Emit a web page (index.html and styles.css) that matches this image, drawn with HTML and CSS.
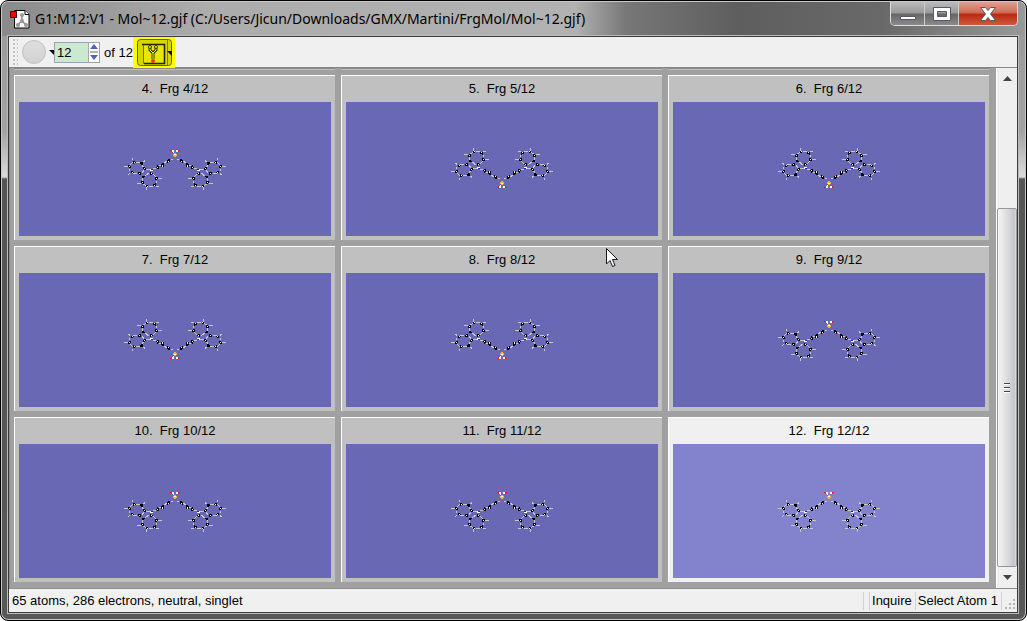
FILE: index.html
```html
<!DOCTYPE html>
<html lang="en">
<head>
<meta charset="utf-8">
<title>G1:M12:V1 - Mol~12.gjf</title>
<link rel="stylesheet" href="styles.css">
</head>
<body>
<svg class="defs" width="0" height="0" aria-hidden="true">
  <defs>
    <g id="half">
      <path d="M20 27.500H25M27 30L29 33M27 38L29 35M18 38.500H22M14.500 34V36M15 30L18 27M38 39L41 42M41.500 46V48M34 51.500H38M28.500 49L31 51M27.500 43V46M30 41L34 38M30 34.500H35M38 34L41 33M44 31L46 30M49 28L52 26M56 24.500H58" stroke="#c8c8c8" fill="none"/>
      <path d="M17.500 23V25M29.500 25V26L28 27M9 31.500H13M13.500 40L15 38M43 43.500H47M41 51.500H44M31.500 52V55M22 48.500H26" stroke="#c8c8c8" fill="none"/>
      <path d="M18 26h2v1h1v1h-2v1h-1zM25 27h3v3h-2v-1h-1zM28 32h2v1h1v2h-2v-1h-1zM23 37h3v3h-2v-1h-1zM16 36h2v1h1v1h-3zM13 30h2v1h1v2h-2v-1h-1zM35 37h1v1h2v1h-1v1h-2zM40 42h3v2h-1v1h-2zM38 49h2v-1h1v3h-3zM31 50h2v2h-2zM26 46h3v3h-2v-1h-1zM27 41h3v1h-1v1h-2zM42 30h1v1h1v3h-2v-1h-1v-1h1zM46 29h3v3h-3zM47 28h2v1h-2zM52 25h3v2h-2v1h-1zM53 24h2v1h-2z" fill="#000"/>
      <path d="M19 27h1v1h-1zM29 33h1v1h-1zM24 38h1v1h-1zM17 37h1v1h-1zM14 31h1v1h-1zM36 38h1v1h-1zM41 43h1v1h-1zM39 50h1v1h-1zM32 51h1v1h-1zM27 47h1v1h-1zM42 32h1v1h-1zM47 30h1v2h-1zM53 26h1v1h-1zM35 34h3v2h-3zM57 15h2v2h-2z" fill="#fff"/>
      <path d="M36 34h2v1h-2z" fill="#1a1aff"/>
      <path d="M55 15h2v1h-2zM56 16h1v1h-1z" fill="#f01818"/>
    </g>
    <g id="mol">
      <use href="#half"/>
      <use href="#half" transform="translate(120 0) scale(-1 1)"/>
      <path d="M59 18h2v4h-2zM58 19h4v2h-4z" fill="#f5b52e"/>
      <path d="M58 17h1v1h-1zM59 19h2v1h-2z" fill="#fff"/>
    </g>
    <symbol id="up" viewBox="0 0 120 65"><use href="#mol"/></symbol>
    <symbol id="down" viewBox="0 0 120 65"><use href="#mol" transform="translate(0 68) scale(1 -1)"/></symbol>
  </defs>
</svg>
<div class="window">
  <header class="titlebar">
    <svg class="app-icon" width="20" height="20" viewBox="0 0 20 20" aria-hidden="true">
      <path d="M4.500 1.500H15L19 5.500V19H4.500Z" fill="#f8f8f8" stroke="#000"/>
      <path d="M15 1.500V5.500H19" fill="#fff" stroke="#000"/>
      <path d="M12 6V12L7 16M12 12L16 16" stroke="#888" stroke-width="1.500" fill="none"/>
      <g fill="#999"><circle cx="12" cy="6" r="2"/><circle cx="12" cy="12" r="2"/><circle cx="8" cy="16" r="2"/><circle cx="16" cy="16" r="2"/></g>
      <path d="M.5 2.500h6v6h-6z" fill="#f00" stroke="#500"/>
    </svg>
    <h1 class="title">G1:M12:V1 - Mol~12.gjf (C:/Users/Jicun/Downloads/GMX/Martini/FrgMol/Mol~12.gjf)</h1>
    <div class="controls">
      <button class="ctl" aria-label="Minimize"><svg width="18" height="14" viewBox="0 0 18 14"><path d="M1.500 9.500h15v3h-15z" fill="#fff" stroke="#555a6b"/></svg></button>
      <button class="ctl" aria-label="Maximize"><svg width="18" height="14" viewBox="0 0 18 14"><path d="M.5.500h17v13H.5zM4.500 4.500V9.500H13.500V4.500z" fill="#fff" fill-rule="evenodd" stroke="#555a6b"/></svg></button>
      <button class="ctl close" aria-label="Close"><svg width="16" height="14" viewBox="0 0 16 14"><path d="M.5.500h5L8 3.500 10.500.500h5L10.500 7l5 6.500h-5L8 10.500 5.500 13.500h-5L5.500 7z" fill="#fff" stroke="#555a6b"/></svg></button>
    </div>
  </header>
  <div class="client">
    <div class="toolbar">
      <span class="grip"></span>
      <button class="orb" aria-label="View"></button>
      <svg class="tri" width="5" height="5" viewBox="0 0 5 5" aria-hidden="true"><path d="M0 0h5v5z"/></svg>
      <div class="spin">
        <input class="num" type="text" value="12" aria-label="Molecule">
        <div class="steps">
          <button class="step" aria-label="Next"><svg width="8" height="5" viewBox="0 0 8 5"><path d="M0 5L4 0L8 5z" fill="#4c66b8"/></svg></button>
          <span class="split"></span>
          <button class="step" aria-label="Previous"><svg width="8" height="5" viewBox="0 0 8 5"><path d="M0 0L4 5L8 0z" fill="#4c66b8"/></svg></button>
        </div>
      </div>
      <span class="of">of 12</span>
      <button class="tile" aria-label="Show multiple views">
        <svg width="42" height="31" viewBox="0 0 42 31" aria-hidden="true">
          <path d="M0 0h42v31H0z" fill="#ff0"/>
          <rect x="4.500" y="2.500" width="34" height="26" rx="3" fill="#d6d600" stroke="#626200"/>
          <path d="M34.500 3V28" stroke="#777700"/>
          <path d="M10.500 7.500h21v19h-21z" fill="#e9e900" stroke="#777700"/>
          <path d="M9 7.500H31.500V27M11 26.500H32" stroke="#222200" stroke-width="1.500" fill="none"/>
          <path d="M17 10V13L20 16V22M23 10V13L20 16" stroke="#333300" stroke-width="3" fill="none"/>
          <path d="M17 10V13L20 16V22M23 10V13L20 16" stroke="#ff0" fill="none"/>
          <circle cx="17" cy="10" r="1.500" fill="#ff0" stroke="#333300"/><circle cx="23" cy="10" r="1.500" fill="#ff0" stroke="#333300"/>
          <circle cx="20" cy="24" r="2" fill="#e04000"/>
          <path d="M34 14h5v5z"/>
        </svg>
      </button>
    </div>
    <div class="body">
      <main class="view">
        <div class="peek"><span></span><span></span><span></span></div>
        <div class="grid">
          <section class="card"><h2>4.&nbsp; Frg 4/12</h2><div class="pic"><svg class="mol"><use href="#up"/></svg></div></section>
          <section class="card"><h2>5.&nbsp; Frg 5/12</h2><div class="pic"><svg class="mol"><use href="#down"/></svg></div></section>
          <section class="card"><h2>6.&nbsp; Frg 6/12</h2><div class="pic"><svg class="mol"><use href="#down"/></svg></div></section>
          <section class="card"><h2>7.&nbsp; Frg 7/12</h2><div class="pic"><svg class="mol"><use href="#down"/></svg></div></section>
          <section class="card"><h2>8.&nbsp; Frg 8/12</h2><div class="pic"><svg class="mol"><use href="#down"/></svg></div></section>
          <section class="card"><h2>9.&nbsp; Frg 9/12</h2><div class="pic"><svg class="mol"><use href="#up"/></svg></div></section>
          <section class="card"><h2>10.&nbsp; Frg 10/12</h2><div class="pic"><svg class="mol"><use href="#up"/></svg></div></section>
          <section class="card"><h2>11.&nbsp; Frg 11/12</h2><div class="pic"><svg class="mol"><use href="#up"/></svg></div></section>
          <section class="card active"><h2>12.&nbsp; Frg 12/12</h2><div class="pic"><svg class="mol"><use href="#up"/></svg></div></section>
        </div>
      </main>
      <div class="scroll">
        <button class="arrow" aria-label="Scroll up"><svg width="9" height="5" viewBox="0 0 9 5"><path d="M0 5L4.500 0L9 5z" fill="#444"/></svg></button>
        <div class="track"><div class="thumb"><svg width="7" height="10" viewBox="0 0 7 10"><path d="M0 .5h6M0 4.500h6M0 8.500h6" stroke="#444"/><path d="M0 1.500h6M0 5.500h6M0 9.500h6" stroke="#fff"/></svg></div></div>
        <button class="arrow" aria-label="Scroll down"><svg width="9" height="5" viewBox="0 0 9 5"><path d="M0 0L4.500 5L9 0z" fill="#444"/></svg></button>
      </div>
    </div>
    <footer class="status">
      <span class="msg">65 atoms, 286 electrons, neutral, singlet</span>
      <span class="cell"></span>
      <span class="cell">Inquire</span>
      <span class="cell">Select Atom 1</span>
      <span class="cell end"><svg width="11" height="11" viewBox="0 0 11 11" aria-hidden="true"><path d="M8 0h2v2h-2zM4 4h2v2h-2zM8 4h2v2h-2zM0 8h2v2h-2zM4 8h2v2h-2zM8 8h2v2h-2z" fill="#b5b5b5"/></svg></span>
    </footer>
  </div>
  <svg class="cursor" width="13" height="20" viewBox="0 0 13 20" aria-hidden="true"><path d="M.5.500V16L4 12.500L6.500 18.500L9 17.500L6.500 11.500H11.500Z" fill="#fff" stroke="#15152a"/></svg>
</div>
</body>
</html>
```
FILE: styles.css
```css
* { box-sizing: border-box; }
body { margin: 0; background: #fff; font-family: "Liberation Sans", Arial, sans-serif; font-size: 13px; color: #000; }
button { border: 0; padding: 0; background: none; display: flex; align-items: center; justify-content: center; }
svg { display: block; flex: none; }
h1, h2 { margin: 0; font-weight: 400; }
.defs { position: absolute; }
.window {
  position: relative; height: 100vh; display: flex; flex-direction: column;
  padding: 0 8px 7px 7px; border: 1px solid #000; border-radius: 8px;
  background: linear-gradient(#999 0, #a2a2a2 130px, #dcdcdc 176px, #555 178px, #585858 100%);
  box-shadow: inset 0 0 0 1px #c8c8c8;
}
.titlebar {
  display: flex; align-items: center; height: 34px; flex: none; margin: 1px -7px 0 -6px; padding-left: 8px;
  border-radius: 7px 7px 0 0;
  background: linear-gradient(90deg, #8a8a8a 0, #acacac 20%, #b2b2b2 56%, #777 61%, #5e5e5e 72%, #696969 86%, #999 100%);
}
.title { margin-left: 5px; font-family: "Noto Sans", sans-serif; font-size: 14px; line-height: 20px; white-space: nowrap; flex: 1; }
.controls { display: flex; align-self: flex-start; height: 24px; margin-right: 7px; border: 1px solid #ddd; border-top: 0; border-radius: 0 0 5px 5px; overflow: hidden; }
.ctl { width: 34px; border-right: 1px solid #ccc; background: linear-gradient(#bbb, #999 48%, #666 52%, #8a8a8a); }
.ctl.close { width: 58px; border: 0; background: linear-gradient(#e0a090, #cf6a55 48%, #b92a10 52%, #d0583c); }
.client { flex: 1; min-height: 0; display: flex; flex-direction: column; border: 1px solid #3c3c3c; background: #f0f0f0; box-shadow: 0 0 0 1px #bbb; }
.toolbar { display: flex; align-items: center; height: 31px; flex: none; padding-left: 3px; border-bottom: 1px solid #888; }
.grip { width: 6px; height: 28px; background: radial-gradient(circle, #c4c4c4 1px, transparent 1px) 0 0 / 4px 4px; }
.orb { width: 24px; height: 24px; margin: 0 3px 0 4px; border: 1px solid #c0c0c0; border-radius: 50%; background: linear-gradient(#dedede, #d2d2d2); }
.spin { display: flex; width: 46px; height: 21px; border: 1px solid #9aa3b5; background: #cbe8d0; }
.num { width: 33px; min-width: 0; padding: 0 0 0 2px; border: 0; background: none; font: inherit; }
.steps { flex: 1; display: flex; flex-direction: column; justify-content: space-evenly; align-items: center; background: #fff; border-left: 1px solid #aaa; }
.split { width: 8px; height: 2px; background: #b4b4b4; }
.of { margin-left: 4px; white-space: nowrap; }
.body { flex: 1; min-height: 0; display: flex; }
.view { flex: 1; min-width: 0; display: flex; flex-direction: column; padding: 0 7px 6px 4px; background: #a0a0a0; border-left: 1px solid #8a8a8a; }
.peek { display: flex; gap: 6px; height: 7px; flex: none; }
.peek span { flex: 1; height: 2px; background: #bfbfbf; border-top: 1px solid #888; }
.grid { flex: 1; min-height: 0; display: grid; grid-template-columns: repeat(3, 1fr); grid-auto-rows: 1fr; gap: 6px; }
.card { display: flex; flex-direction: column; padding: 0 4px 4px; background: #c0c0c0; border-left: 1px solid #fff; border-top: 1px solid #fff; }
.card h2 { font-size: 13px; line-height: 26px; text-align: center; }
.pic { flex: 1; display: flex; align-items: center; justify-content: center; background: #6868b4; }
.mol { width: 120px; height: 65px; margin-bottom: 3px; shape-rendering: crispEdges; }
.card.active { background: #f0f0f0; }
.active .pic { background: #8282cd; }
.scroll { width: 21px; display: flex; flex-direction: column; background: #efefef; border-left: 1px solid #fff; }
.arrow { height: 21px; }
.track { flex: 1; padding-top: 119px; display: flex; }
.thumb { flex: 1; display: flex; align-items: center; justify-content: center; border: 1px solid #979797; border-radius: 2px; background: linear-gradient(90deg, #f5f5f5, #dcdce0 50%, #c4c4cc 90%, #ddd); }
.status { display: flex; align-items: center; height: 24px; flex: none; border-top: 1px solid #8e8e8e; }
.msg { flex: 1; padding-left: 3px; }
.cell { display: flex; align-items: flex-end; height: 18px; line-height: 18px; padding: 0 3px 0 2px; border-left: 1px solid #d2d2d2; white-space: nowrap; }
.cell.end { padding: 0 1px 0 3px; }
.cursor { position: absolute; left: 605px; top: 247px; }
```
